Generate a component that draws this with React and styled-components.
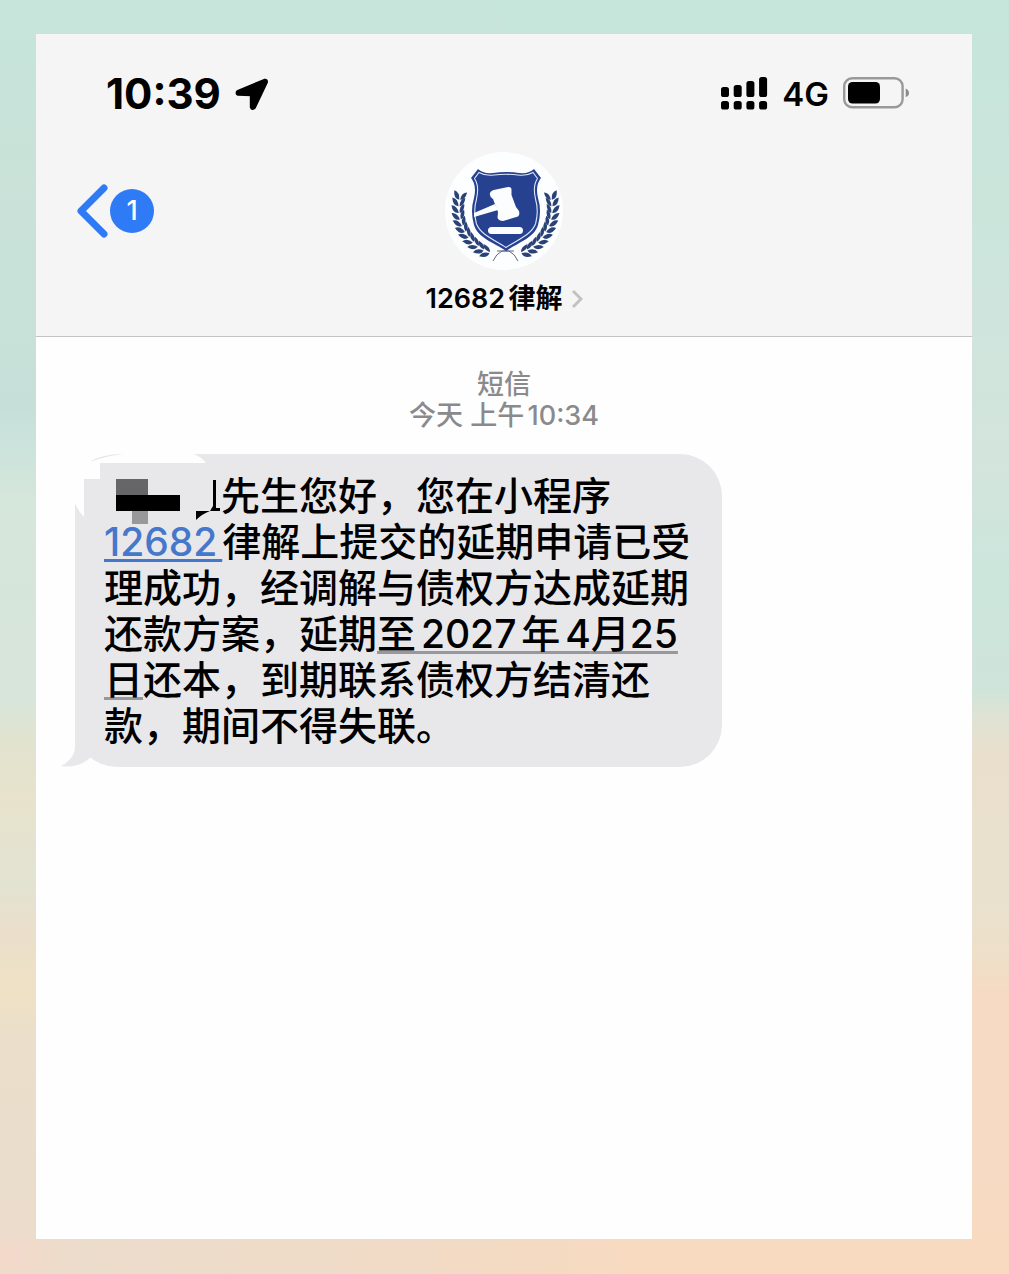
import styled, { createGlobalStyle } from 'styled-components';

const GlobalStyle = createGlobalStyle`
* {
box-sizing: border-box;
}

body {
margin: 0;
font-family: Inter, "Noto Sans CJK SC", sans-serif;
color: #000;
}
`

const Backdrop = styled.div`
display: flex;
min-height: 100vh;
padding: 34px 37px 35px 36px;
background:
linear-gradient(90deg, #f2d9ca 0%, #ecdccb 8%, #eedbc8 30%, #f8dac0 65%, #f8dac0 100%) 0 100% / 100% 35px no-repeat,
linear-gradient(180deg, #c6e5db 0%, #cae2d8 14%, #c6e0d9 32%, #cbe3dc 35%, #d5e6da 39%, #d8e5da 55%, #e1e3cf 58%, #e7e2cc 63%, #e2e3d2 69%, #eadfcb 73%, #efe1c4 78%, #ebdfcb 81%, #eaddcb 92%, #eedbcb 100%) 0 0 / 50% 100% no-repeat,
linear-gradient(180deg, #c6e5db 0%, #cde5dc 20%, #d3e4dc 36%, #cce6dc 45%, #cfe4da 54%, #dde3d5 56%, #e9dfcc 59%, #e9e1ce 71%, #eedfc8 75%, #f6dac3 78%, #f6dac4 90%, #f9dac0 100%);
`

const Phone = styled.main`
flex: 1;
display: flex;
flex-direction: column;
background-color: #fefefe;
`

const Header = styled.header`
background-color: #f5f5f5;
border-bottom: 1px solid #c4c4c6;
padding: 36px 62px 20px 70px;
`

const StatusBar = styled.div`
display: flex;
align-items: center;
justify-content: space-between;
height: 48px;
`

const StatusGroup = styled.div`
display: flex;
align-items: center;
gap: 14px;
`

const Clock = styled.time`
font-size: 42px;
font-weight: 700;
line-height: 48px;
`

const Network = styled.span`
font-size: 33px;
font-weight: 600;
line-height: 48px;
`

const NavBar = styled.nav`
display: grid;
grid-template-columns: 1fr auto 1fr;
margin: 33px -22px 0 -30px;
`

const BackButton = styled.button`
display: flex;
align-items: center;
justify-self: start;
height: 120px;
padding: 0;
border: none;
background: none;
`

const Unread = styled.span`
width: 44px;
height: 44px;
border-radius: 50%;
background-color: #2f7bf6;
color: #fff;
font: 500 27px/44px Inter, sans-serif;
text-align: center;
`

const Contact = styled.a`
display: flex;
flex-direction: column;
align-items: center;
gap: 11px;
color: #000;
text-decoration: none;
`

const ContactName = styled.span`
display: flex;
align-items: center;
gap: 8px;
font-size: 27px;
font-weight: 600;
line-height: 34px;
text-autospace: normal;
`

const Thread = styled.section`
padding: 32px 39px;
`

const Stamp = styled.div`
color: #8a8a8d;
font-size: 27px;
font-weight: 500;
line-height: 31px;
text-align: center;
text-autospace: normal;
`

const Bubble = styled.article`
position: relative;
width: fit-content;
margin-top: 23px;
padding: 19px 32px 18px 29px;
border-radius: 42px;
background-color: #e8e8eb;
`

const BubbleText = styled.p`
margin: 0;
font-size: 39px;
font-weight: 500;
line-height: 46px;
text-autospace: normal;
`

const NumberLink = styled.a`
color: #4577cb;
text-decoration: underline;
text-decoration-thickness: 3px;
text-underline-offset: 3px;
`

const DateLink = styled.a`
color: #000;
text-decoration: underline;
text-decoration-color: #98989c;
text-decoration-thickness: 3px;
text-decoration-skip-ink: none;
text-underline-offset: 3px;
`

const Tight = styled.span`
text-autospace: no-autospace;
`

const Redaction = styled.svg`
display: inline-block;
width: 117px;
height: 46px;
overflow: visible;
vertical-align: top;
`

const Tail = styled.svg`
position: absolute;
left: -14px;
bottom: 0;
`

const Erased = styled.svg`
position: absolute;
left: -1px;
top: -1px;
`

const LocationIcon = () => (
	<svg width="34" height="34" viewBox="0 0 34 34" aria-hidden="true">
		<path
			d="M29.500 3.500 L3 14.5 Q1.500 16 3 17 L16.500 17.500 L16.500 30 Q17.500 32.500 19.200 30.500 L31.300 5 Q31.300 3 29.500 3.500Z"
			stroke="#000"
			strokeWidth="3.4"
			strokeLinejoin="round"
		/>
	</svg>
);

const SignalIcon = () => (
	<svg width="48" height="34" viewBox="0 0 48 34" aria-hidden="true">
		{[10, 8, 4, 0].map((top, i) => (
			<g key={top}>
				<rect x={1 + i * 12.7} y={top} width="8" height={20 - top} rx="2.6" />
				<rect x={1 + i * 12.7} y="24" width="8" height="8.6" rx="2.6" />
			</g>
		))}
	</svg>
);

const BatteryIcon = () => (
	<svg width="67" height="34" viewBox="0 0 67 34" aria-hidden="true">
		<rect x="1.2" y="1.2" width="58.4" height="29" rx="8" fill="none" stroke="#999" strokeWidth="2.4" />
		<rect x="5" y="5" width="32" height="21.5" rx="4.5" />
		<path d="M62.7 11.500 Q66 13 66 16 T62.7 20Z" fill="#8c8c8c" />
	</svg>
);

const BackIcon = () => (
	<svg width="34" height="54" viewBox="0 0 34 54" aria-hidden="true">
		<path d="M28 4 L5 27 L28 50" fill="none" stroke="#2f7bf6" strokeWidth="7" strokeLinecap="round" strokeLinejoin="round" />
	</svg>
);

const ChevronIcon = () => (
	<svg width="12" height="20" viewBox="0 0 12 20" aria-hidden="true">
		<path d="M2 2 L10 10 L2 18" fill="none" stroke="#c2c2c5" strokeWidth="3" />
	</svg>
);

// leaves grow in pairs along an arc around the shield
const leaves = Array.from({ length: 11 }, (_, i) => {
	const angle = 190 - i * 8;
	const rad = (angle * Math.PI) / 180;
	return {
		x: 61.5 + 47 * Math.cos(rad),
		y: 57 + 48 * Math.sin(rad),
		turn: angle + 90
	};
});

const Laurel = () => (
	<g fill="#2b4276">
		<path d="M49 110 Q52 103 58 100 H70" fill="none" stroke="#5c6680" strokeWidth="1" />
		{leaves.map(({ x, y, turn }) => (
			<g key={turn} transform={`translate(${x} ${y}) rotate(${turn})`}>
				<path d="M0 0 Q0 -6 8.500 -6.500 Q7.500 -0.500 0 0Z" />
				<path d="M0 1 Q1 6 8.500 6.500 Q7.500 1 0 1Z" />
			</g>
		))}
	</g>
);

const Avatar = () => (
	<svg width="120" height="120" viewBox="0 0 120 120" role="img" aria-label="12682律解">
		<circle cx="60" cy="60" r="59" fill="#fcfeff" />
		<Laurel />
		<g transform="translate(123 0) scale(-1 1)">
			<Laurel />
		</g>
		<path
			d="M34 18 Q39 23 49 22 Q56 21 62 21 Q68 21 75 22 Q85 23 90 18 L97 27 Q91 34 94 47 Q98 60 94 74 C90 87 75 91 62 100 C49 91 34 87 30 74 Q26 60 30 47 Q33 34 27 27Z"
			fill="#25418f"
		/>
		<path
			d="M35 21.5 Q41 25 50 24 Q62 22.5 74 24 Q83 25 89 21.5 L93.5 27.5 Q88.500 35 91.500 48 Q95 60 91.500 73 C87 84 74 88.500 62 96.500 C50 88.500 37 84 32.500 73 Q29 60 32.500 48 Q35.500 35 30.500 27.500Z"
			fill="none"
			stroke="#dfe8fb"
			strokeWidth="1.1"
		/>
		<g fill="#fbfdff">
			<path d="M30 62 L51 53 L54 59 L30 66Z" />
			<path d="M46 42 Q47 39 52 38.500 L64 36 Q67 35.500 67.500 38 L67.500 44 L72 56 L75 60 Q76 64 74 65.500 L59 70 Q55 70 53.500 67 L54 61 L49 48 Q45 45.500 46 42Z" />
			<rect x="44" y="76" width="35" height="7" rx="3.500" />
		</g>
	</svg>
);

const App = () => (
	<>
		<GlobalStyle />
		<Backdrop>
			<Phone>
				<Header>
					<StatusBar>
						<StatusGroup>
							<Clock>10:39</Clock>
							<LocationIcon />
						</StatusGroup>
						<StatusGroup>
							<SignalIcon />
							<Network>4G</Network>
							<BatteryIcon />
						</StatusGroup>
					</StatusBar>
					<NavBar>
						<BackButton type="button">
							<BackIcon />
							<Unread>1</Unread>
						</BackButton>
						<Contact href="#">
							<Avatar />
							<ContactName>
								12682律解
								<ChevronIcon />
							</ContactName>
						</Contact>
					</NavBar>
				</Header>
				<Thread>
					<Stamp>
						短信
						<br />
						今天 上午10:34
					</Stamp>
					<Bubble>
						<Tail width="39" height="50" viewBox="0 0 39 50" aria-hidden="true">
							<path d="M14 0 V30 C14 38 8 45 0 49 C13 51 23 47 31 39 L38 20 L30 0Z" fill="#e8e8eb" />
						</Tail>
						<Erased width="134" height="66" viewBox="0 0 134 66" aria-hidden="true">
							<path d="M0 0 H117 Q127 3 132 10 H26 V26 H10 V64 Q4 58 0 48Z" fill="#fefefe" />
							<path d="M16 9 Q28 1 50 1 Q30 3 16 9Z" fill="#e3e3e5" />
						</Erased>
						<BubbleText>
							<Redaction viewBox="0 0 117 46" aria-hidden="true">
								<rect x="12" y="6" width="32" height="16" fill="#666668" />
								<rect x="12" y="22" width="64" height="16" />
								<rect x="28" y="38" width="16" height="13" fill="#98989a" />
								<path d="M109 7 H112 V35 H116 V38 H106 Q98 41 92 47 V38 H106 L109 33Z" />
							</Redaction>
							先生您好，您在小程序
							<br />
							<NumberLink href="#">12682</NumberLink>律解上提交的延期申请已受
							<br />
							理成功，经调解与债权方达成延期
							<br />
							还款方案，延期
							<DateLink href="#">
								至2027年4<Tight>月25</Tight>
								<br />日
							</DateLink>
							还本，到期联系债权方结清还
							<br />
							款，期间不得失联。
						</BubbleText>
					</Bubble>
				</Thread>
			</Phone>
		</Backdrop>
	</>
);

export default App;
